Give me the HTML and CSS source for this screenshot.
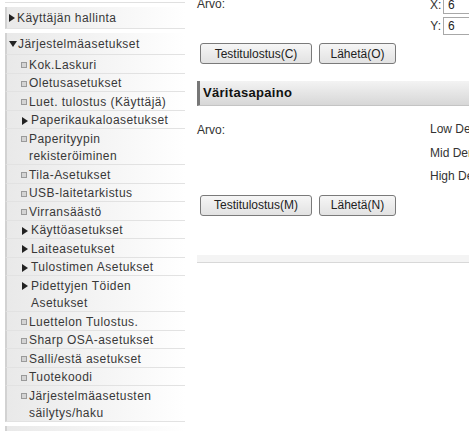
FILE: index.html
```html
<!DOCTYPE html>
<html>
<head>
<meta charset="utf-8">
<link rel="stylesheet" href="styles.css">
</head>
<body>
<div class="page">
  <nav class="side">
    <div class="stub"></div>
    <div class="group">
      <div class="head"><span class="tri-r"></span>Käyttäjän hallinta</div>
    </div>
    <div class="group">
      <div class="head open"><span class="tri-d"></span>Järjestelmäasetukset</div>
      <div class="item"><span class="sq"></span><span class="lbl">Kok.Laskuri</span></div>
      <div class="item"><span class="sq"></span><span class="lbl">Oletusasetukset</span></div>
      <div class="item"><span class="sq"></span><span class="lbl">Luet. tulostus (Käyttäjä)</span></div>
      <div class="item"><span class="tri-s"></span><span class="lbl">Paperikaukaloasetukset</span></div>
      <div class="item"><span class="sq"></span><span class="lbl">Paperityypin<br>rekisteröiminen</span></div>
      <div class="item"><span class="sq"></span><span class="lbl">Tila-Asetukset</span></div>
      <div class="item"><span class="sq"></span><span class="lbl">USB-laitetarkistus</span></div>
      <div class="item"><span class="sq"></span><span class="lbl">Virransäästö</span></div>
      <div class="item"><span class="tri-s"></span><span class="lbl">Käyttöasetukset</span></div>
      <div class="item"><span class="tri-s"></span><span class="lbl">Laiteasetukset</span></div>
      <div class="item"><span class="tri-s"></span><span class="lbl">Tulostimen Asetukset</span></div>
      <div class="item"><span class="tri-s"></span><span class="lbl">Pidettyjen Töiden<br>Asetukset</span></div>
      <div class="item"><span class="sq"></span><span class="lbl">Luettelon Tulostus.</span></div>
      <div class="item"><span class="sq"></span><span class="lbl">Sharp OSA-asetukset</span></div>
      <div class="item"><span class="sq"></span><span class="lbl">Salli/estä asetukset</span></div>
      <div class="item"><span class="sq"></span><span class="lbl">Tuotekoodi</span></div>
      <div class="item"><span class="sq"></span><span class="lbl">Järjestelmäasetusten<br>säilytys/haku</span></div>
    </div>
    <div class="group">
      <div class="head">&nbsp;</div>
    </div>
  </nav>
  <main class="main">
    <div class="row">
      <div class="label">Arvo:</div>
      <div class="vals">
        <div class="xy"><span class="xyl">X:</span><span class="inp">6</span></div>
        <div class="xy"><span class="xyl">Y:</span><span class="inp">6</span></div>
      </div>
    </div>
    <div class="buttons">
      <button class="btn w1">Testitulostus(C)</button>
      <button class="btn w2">Lähetä(O)</button>
    </div>
    <h2 class="section">Väritasapaino</h2>
    <div class="row row2">
      <div class="label">Arvo:</div>
      <div class="vals dens">
        <div>Low Density</div>
        <div>Mid Density</div>
        <div>High Density</div>
      </div>
    </div>
    <div class="buttons b2">
      <button class="btn w1">Testitulostus(M)</button>
      <button class="btn w2">Lähetä(N)</button>
    </div>
    <div class="band"></div>
  </main>
</div>
</body>
</html>
```
FILE: styles.css
```css
html, body {
  margin: 0;
  padding: 0;
  background: #fff;
  overflow: hidden;
}
body {
  width: 469px;
  height: 431px;
}
.page {
  display: flex;
  align-items: flex-start;
  gap: 12px;
  padding-left: 5px;
  white-space: nowrap;
}
.side {
  width: 180px;
  flex: none;
  display: flex;
  flex-direction: column;
  gap: 4px;
  font-family: "Liberation Sans", Arial, sans-serif;
  font-size: 12px;
  letter-spacing: 0.45px;
  color: #383838;
}
.stub {
  height: 0;
  border-bottom: 1px solid #e0e0e0;
  margin-top: 2px;
}
.group {
  display: flex;
  flex-direction: column;
}
.head, .item {
  border-left: 2px solid #d2d2d2;
  border-bottom: 1px solid #e2e2e2;
  background: linear-gradient(to right, #e9e9e9, #f6f6f6 60%, #ffffff);
  display: flex;
  align-items: flex-start;
}
.head {
  height: 19px;
  line-height: 19px;
  padding-top: 2px;
  padding-left: 2px;
}
.head.open {
  height: 18px;
  line-height: 17px;
  padding-top: 3px;
}
.item {
  line-height: 17.5px;
  padding-top: 1.5px;
  padding-left: 13px;
}
.tri-r {
  display: inline-block;
  width: 0;
  height: 0;
  border-left: 6px solid #222;
  border-top: 4px solid transparent;
  border-bottom: 4px solid transparent;
  margin: 5px 2px 0 0;
}
.tri-d {
  display: inline-block;
  width: 0;
  height: 0;
  border-top: 6px solid #222;
  border-left: 4px solid transparent;
  border-right: 4px solid transparent;
  margin: 5px 1px 0 0;
}
.tri-s {
  display: inline-block;
  flex: none;
  width: 0;
  height: 0;
  border-left: 6px solid #222;
  border-top: 4px solid transparent;
  border-bottom: 4px solid transparent;
  margin: 4.5px 3px 0 2px;
}
.sq {
  display: inline-block;
  flex: none;
  width: 4px;
  height: 4px;
  border: 1px solid #9a9a9a;
  background: #d4d4d4;
  margin: 5.5px 2px 0 1px;
}
.lbl {
  display: inline-block;
  margin-bottom: -1.5px;
}
.main {
  flex: none;
  width: 300px;
  margin-top: -4px;
  font-family: "Liberation Sans", Arial, sans-serif;
  font-size: 12px;
  color: #333;
}
.row {
  display: grid;
  grid-template-columns: 233px auto;
}
.label {
  line-height: 16px;
}
.vals {
  display: flex;
  flex-direction: column;
  gap: 3px;
}
.xy {
  display: flex;
  align-items: center;
  gap: 2px;
}
.xyl {
  width: 11px;
  text-align: right;
}
.inp {
  display: inline-block;
  width: 60px;
  height: 16px;
  line-height: 16px;
  border: 1px solid #a8a8a8;
  padding-left: 4px;
  color: #222;
}
.buttons {
  display: flex;
  gap: 7px;
  margin-top: 8px;
  padding-left: 3px;
}
.btn {
  height: 21px;
  border: 1px solid #7a7a7a;
  border-radius: 3px;
  background: linear-gradient(#f6f6f6, #e2e2e2);
  font-family: "Liberation Sans", Arial, sans-serif;
  font-size: 12px;
  color: #222;
  padding: 0;
}
.w1 { width: 112px; }
.w2 { width: 77px; }
.section {
  margin: 17px 0 0 0;
  height: 24px;
  line-height: 24px;
  border-left: 3px solid #777;
  background: linear-gradient(#f3f3f3, #d7d7d7);
  border-bottom: 1px solid #c4c4c4;
  font-size: 13px;
  font-weight: bold;
  color: #111;
  padding-left: 3px;
  letter-spacing: 0.3px;
}
.row2 {
  margin-top: 16px;
}
.dens {
  gap: 8px;
}
.dens div {
  line-height: 15.5px;
}
.b2 {
  margin-top: 10px;
}
.band {
  margin-top: 39px;
  height: 7px;
  background: #f4f4f4;
  border-bottom: 1px solid #d8d8d8;
}
```
